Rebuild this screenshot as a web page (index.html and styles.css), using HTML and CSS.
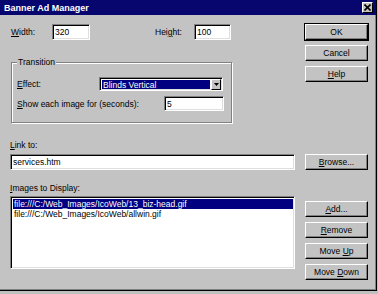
FILE: index.html
```html
<!DOCTYPE html>
<html>
<head>
<meta charset="utf-8">
<link rel="stylesheet" href="styles.css">
</head>
<body>
<div class="window">
  <div class="titlebar">
    <span class="title">Banner Ad Manager</span>
    <span class="close">
      <svg width="7" height="7" viewBox="0 0 7 7"><path d="M0.5 0.5 L6.5 6.5 M6.5 0.5 L0.5 6.5" stroke="#000" stroke-width="1.6"/></svg>
    </span>
  </div>
  <div class="content">
    <div class="row">
      <div class="left">
        <div class="size-row">
          <span class="lbl lbl-width"><u>W</u>idth:</span>
          <span class="field f-width">320</span>
          <span class="lbl lbl-height">Hei<u>g</u>ht:</span>
          <span class="field f-height">100</span>
        </div>
        <div class="group">
          <span class="legend">Transition</span>
          <div class="grow effect">
            <span class="lbl lbl-effect"><u>E</u>ffect:</span>
            <span class="select">
              <span class="sel-value">Blinds Vertical</span>
              <span class="sel-arrow">
                <svg width="5" height="3" viewBox="0 0 5 3"><path d="M0 0 H5 L2.5 3 Z" fill="#000"/></svg>
              </span>
            </span>
          </div>
          <div class="grow secs">
            <span class="lbl lbl-secs"><u>S</u>how each image for (seconds):</span>
            <span class="field f-secs">5</span>
          </div>
        </div>
      </div>
      <div class="btns">
        <span class="btn default"><span>OK</span></span>
        <span class="btn"><span>Cancel</span></span>
        <span class="btn"><span><u>H</u>elp</span></span>
      </div>
    </div>

    <div class="lbl link-label"><u>L</u>ink to:</div>
    <div class="row link-row">
      <span class="field f-link">services.htm</span>
      <div class="btns">
        <span class="btn"><span><u>B</u>rowse...</span></span>
      </div>
    </div>

    <div class="lbl images-label"><u>I</u>mages to Display:</div>
    <div class="row">
      <div class="list">
        <div class="item selected">file:///C:/Web_Images/IcoWeb/13_biz-head.gif</div>
        <div class="item">file:///C:/Web_Images/IcoWeb/allwin.gif</div>
      </div>
      <div class="btns list-btns">
        <span class="btn"><span><u>A</u>dd...</span></span>
        <span class="btn"><span><u>R</u>emove</span></span>
        <span class="btn"><span>Move <u>U</u>p</span></span>
        <span class="btn"><span>Move <u>D</u>own</span></span>
      </div>
    </div>
  </div>
</div>
</body>
</html>
```
FILE: styles.css
```css
* { box-sizing: border-box; }
html, body { margin: 0; padding: 0; }
body {
  background: #c0c0c0;
  width: 378px;
  height: 294px;
  overflow: hidden;
  font-family: "Liberation Sans", Arial, sans-serif;
  font-size: 8.5px;
  color: #000;
}
u { text-decoration: underline; text-underline-offset: 1px; }

.window {
  width: 377px;
  height: 291px;
  background: #c3c3c3;
  border-right: 1px solid #000;
  border-bottom: 1px solid #000;
  box-shadow: inset -1px -1px 0 #808080;
}
.titlebar {
  height: 15px;
  background: #06066e;
  display: flex;
  align-items: center;
  justify-content: space-between;
  padding: 0 3px 0 4px;
}
.title { color: #fff; font-weight: bold; font-size: 9px; }
.close {
  width: 11px;
  height: 11px;
  background: #c3c3c3;
  border: 1px solid;
  border-color: #fff #000 #000 #fff;
  display: flex;
  align-items: center;
  justify-content: center;
}

.content { padding: 9px 0 0 10px; display: flex; flex-direction: column; }
.row { display: flex; gap: 10px; align-items: flex-start; }
.left { width: 285px; }
.btns { display: flex; flex-direction: column; gap: 5px; width: 63px; }
.btn {
  height: 16px;
  background: #c3c3c3;
  border: 1px solid;
  border-color: #fff #000 #000 #fff;
  box-shadow: inset -1px -1px 0 #808080;
  display: flex;
  align-items: center;
  justify-content: center;
  line-height: 10px;
  white-space: nowrap;
}
.btn.default { outline: 1px solid #000; }

.lbl { line-height: 10px; white-space: nowrap; }
.field {
  background: #fff;
  border: 1px solid;
  border-color: #808080 #fff #fff #808080;
  box-shadow: inset 1px 1px 0 #000, inset -1px -1px 0 #dfdfdf;
  height: 16px;
  padding: 0 2px;
  display: flex;
  align-items: center;
  line-height: 10px;
}

.size-row { display: flex; align-items: center; height: 16px; padding-left: 1px; }
.lbl-width { width: 41px; }
.f-width { width: 38px; }
.lbl-height { margin-left: 65px; width: 39px; }
.f-height { width: 37px; }

.group {
  margin-top: 22px;
  margin-left: 1px;
  width: 221px;
  height: 61px;
  border: 1px solid #808080;
  box-shadow: 1px 1px 0 #fff, inset 1px 1px 0 #fff;
  padding: 0 7px 0 5px;
  display: flex;
  flex-direction: column;
}
.legend {
  align-self: flex-start;
  margin-top: -6px;
  padding: 0 1px;
  background: #c3c3c3;
  line-height: 10px;
}
.grow { display: flex; align-items: center; }
.grow.effect { margin-top: 10px; }
.grow.secs { margin-top: 5px; }
.lbl-effect { width: 82px; }
.lbl-secs { width: 147px; }
.f-secs { width: 60px; height: 15px; }

.select {
  width: 124px;
  height: 14px;
  background: #fff;
  border: 1px solid;
  border-color: #808080 #fff #fff #808080;
  box-shadow: inset 1px 1px 0 #000, inset -1px -1px 0 #dfdfdf;
  padding: 2px 1px 1px 2px;
  display: flex;
  gap: 1px;
}
.sel-value {
  flex: 1;
  background: #000080;
  color: #fff;
  line-height: 10px;
  padding-left: 1px;
}
.sel-arrow {
  width: 10px;
  margin-top: -1px;
  height: 11px;
  background: #c3c3c3;
  border: 1px solid;
  border-color: #fff #000 #000 #fff;
  display: flex;
  align-items: center;
  justify-content: center;
}

.link-label { margin-top: 17px; }
.link-row { margin-top: 4px; }
.f-link { width: 285px; }

.images-label { margin-top: 13px; }
.images-label + .row { margin-top: 3px; }
.list {
  width: 285px;
  height: 73px;
  background: #fff;
  border: 1px solid;
  border-color: #808080 #fff #fff #808080;
  box-shadow: inset 1px 1px 0 #000, inset -1px -1px 0 #dfdfdf;
  padding: 2px 1px 2px 2px;
}
.item { line-height: 10px; padding-left: 1px; white-space: nowrap; }
.item.selected { background: #000080; color: #fff; }
.list-btns { margin-top: 5px; }
```
